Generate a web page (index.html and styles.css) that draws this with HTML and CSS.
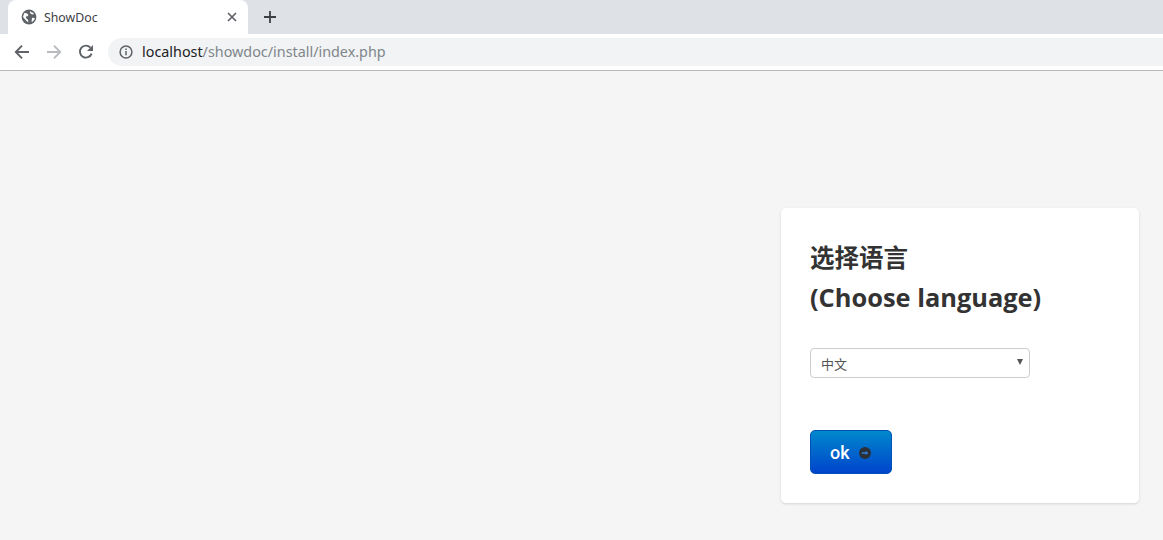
FILE: index.html
```html
<!DOCTYPE html>
<html lang="zh">
<head>
<meta charset="utf-8">
<title>ShowDoc</title>
<link rel="stylesheet" href="styles.css">
</head>
<body>
<header class="chrome">
  <div class="tabstrip">
    <div class="tab">
      <svg class="favicon" viewBox="0 0 16 16" width="16" height="16"><circle cx="8" cy="8" r="7.4" fill="#5f6368"/><path d="M3.2 4l2.6.3 1.6 1.5-.8 1.4-1.8.3.4 1.7 2 1.9v2.4L4.6 11 2 8zM9.6 2l1 1.5 1.5.2.9 1.3-1.5.5-1.4-.5-1.2-1.2zM11 8.8l2.6.1.2 1.2-2 2.5-1.2.4.2-2.4z" fill="#fff"/></svg>
      <span class="tab-title">ShowDoc</span>
      <svg class="tab-close" viewBox="0 0 10 10" width="10" height="10"><path d="M1 1l8 8M9 1l-8 8" stroke="#5f6368" stroke-width="1.7" fill="none"/></svg>
    </div>
    <svg class="new-tab" viewBox="0 0 12 12" width="12" height="12"><path d="M6 0v12M0 6h12" stroke="#3c4043" stroke-width="1.8" fill="none"/></svg>
  </div>
  <div class="toolbar">
    <svg class="nav" viewBox="0 0 16 16" width="16" height="16"><path d="M15 8H2M8 1.6L1.8 8 8 14.4" stroke="#5f6368" stroke-width="1.9" fill="none"/></svg>
    <svg class="nav" viewBox="0 0 16 16" width="16" height="16"><path d="M1 8h13M8 1.6L14.2 8 8 14.4" stroke="#b9bbbe" stroke-width="1.9" fill="none"/></svg>
    <svg class="nav" viewBox="0 0 16 16" width="16" height="16"><path d="M13.6 9.6A6 6 0 1 1 12.4 3.6" stroke="#5f6368" stroke-width="1.9" fill="none"/><path d="M15 1v6H9z" fill="#5f6368"/></svg>
    <div class="omnibox">
      <svg class="info" viewBox="0 0 14 14" width="14" height="14"><circle cx="7" cy="7" r="5.9" stroke="#5f6368" stroke-width="1.5" fill="none"/><path d="M7 6v4.2M7 3.5v1.5" stroke="#5f6368" stroke-width="1.5" fill="none"/></svg>
      <span class="url"><span class="host">localhost</span>/showdoc/install/index.php</span>
    </div>
  </div>
</header>
<main class="page">
  <section class="card">
    <h1 class="title"><span class="title-cn">选择语言</span><span class="title-en">(Choose language)</span></h1>
    <div class="select-wrap">
      <select class="lang">
        <option>中文</option>
        <option>English</option>
      </select>
    </div>
    <button class="ok" type="button">ok
      <svg class="ok-icon" viewBox="0 0 12 12" width="12" height="12"><circle cx="6" cy="6" r="6" fill="#2b2f36"/><path d="M2.8 6h4.4" stroke="#2f80d8" stroke-width="1.5"/><path d="M6.6 3.9L9.4 6 6.6 8.1z" fill="#2f80d8"/></svg>
    </button>
  </section>
</main>
</body>
</html>
```
FILE: styles.css
```css
html, body {
  margin: 0;
  height: 100%;
}
body {
  display: flex;
  flex-direction: column;
  height: 540px;
  overflow: hidden;
  background: #f5f5f5;
  font-family: "Open Sans", "Noto Sans CJK SC", sans-serif;
}
.chrome {
  flex: none;
  height: 71px;
  box-sizing: border-box;
  background: #fff;
  border-bottom: 1px solid #b8b9ba;
}
.tabstrip {
  display: flex;
  align-items: center;
  height: 34px;
  padding-left: 8px;
  background: #dee1e6;
}
.tab {
  display: flex;
  align-items: center;
  align-self: stretch;
  width: 240px;
  box-sizing: border-box;
  padding: 0 11px 0 13px;
  background: #fff;
  border-radius: 8px 8px 0 0;
}
.tab-title {
  flex: 1;
  margin-left: 7px;
  font: 12.3px "Noto Sans", "Open Sans", sans-serif;
  color: #3c4043;
}
.new-tab {
  margin-left: 16px;
}
.toolbar {
  display: flex;
  align-items: center;
  gap: 16px;
  height: 36px;
  padding-left: 14px;
}
.nav {
  flex: none;
}
.omnibox {
  flex: 1;
  display: flex;
  align-items: center;
  height: 28px;
  margin-left: -2px;
  padding-left: 11px;
  background: #f1f3f4;
  border-radius: 14px 0 0 14px;
}
.url {
  margin-left: 9px;
  padding-bottom: 2px;
  font: 14.35px "Noto Sans", "Open Sans", sans-serif;
  color: #80868b;
}
.host {
  color: #202124;
}
.page {
  flex: 1;
  display: flex;
  justify-content: flex-end;
  align-items: flex-start;
  padding: 137px 24px 0 0;
}
.card {
  width: 358px;
  height: 295px;
  box-sizing: border-box;
  padding: 30px 29px 0;
  background: #fff;
  border-radius: 5px;
  box-shadow: 0 1px 3px rgba(0, 0, 0, .13);
}
.title {
  margin: 0;
  font-size: 24.5px;
  font-weight: 700;
  color: #333;
}
.title-cn {
  display: block;
  line-height: 39px;
}
.title-en {
  display: block;
  font-size: 25.4px;
  line-height: 41px;
}
.select-wrap {
  position: relative;
  width: 220px;
  margin-top: 30px;
}
.select-wrap::after {
  content: "";
  position: absolute;
  top: 11px;
  right: 7px;
  border-left: 3px solid transparent;
  border-right: 3px solid transparent;
  border-top: 6px solid #555;
}
.lang {
  display: block;
  width: 100%;
  height: 30px;
  box-sizing: border-box;
  padding: 0 0 0 10px;
  appearance: none;
  background: #fff;
  border: 1px solid #ccc;
  border-radius: 4px;
  font: 13px "Noto Sans CJK SC", sans-serif;
  color: #555;
}
.ok {
  display: flex;
  align-items: center;
  gap: 9px;
  width: 82px;
  height: 44px;
  margin-top: 52px;
  padding: 0 0 0 19px;
  border: 1px solid #0050b8;
  border-radius: 5px;
  background: linear-gradient(#0088cc, #0044cc);
  font: 500 18px Roboto, sans-serif;
  color: #fff;
}
.ok-icon {
  flex: none;
  margin-top: 1px;
}
```
